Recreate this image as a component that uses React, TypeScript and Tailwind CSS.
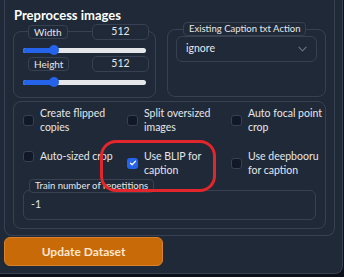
import React from "react";

const font = { fontFamily: "Lato, 'Noto Sans', sans-serif" };

function Chip({ children, className = "" }: { children: React.ReactNode; className?: string }) {
  return (
    <div
      className={
        "flex items-center h-[14px] px-[5px] rounded-[4px] border border-[#374151] bg-[#1f2937] text-[9.5px] leading-none text-[#e5e7eb] " +
        className
      }
    >
      {children}
    </div>
  );
}

function Slider({ label, value }: { label: string; value: number }) {
  const pct = 25;
  return (
    <div className="flex flex-col">
      <div className="flex items-center justify-between h-[16px] pl-[14px] pr-[6px]">
        <Chip className="text-[10px]">{label}</Chip>
        <div className="w-[57px] h-[16px] rounded-[5px] border border-[#374151] bg-[#1f2937] flex items-center justify-center text-[10.5px] text-[#e5e7eb]">
          {value}
        </div>
      </div>
      <div className="relative ml-[9px] mr-[9px] mt-[5px] h-[10px] flex items-center">
        <div className="w-full h-[5px] rounded-full bg-[#e5e7eb] overflow-hidden flex">
          <div className="h-full bg-[#2563eb]" style={{ width: `${pct}%` }} />
        </div>
        <div
          className="absolute top-0 w-[10px] h-[10px] rounded-full bg-[#2563eb]"
          style={{ left: `calc(${pct}% - 5px)` }}
        />
      </div>
    </div>
  );
}

function Check({ label, checked = false }: { label: React.ReactNode; checked?: boolean }) {
  return (
    <div className="flex items-center gap-[6px]">
      <div
        className={
          "shrink-0 w-[11px] h-[11px] rounded-[3px] flex items-center justify-center " +
          (checked ? "bg-[#2563eb]" : "bg-[#111827] border border-[#374151]")
        }
      >
        {checked && (
          <svg width="8" height="8" viewBox="0 0 16 16" fill="none">
            <path d="M3 8.5l3.2 3L13 4.5" stroke="white" strokeWidth="2.4" strokeLinecap="round" strokeLinejoin="round" />
          </svg>
        )}
      </div>
      <div className="text-[10.5px] leading-[14px] text-[#e5e7eb]">{label}</div>
    </div>
  );
}

export default function App() {
  return (
    <div className="w-[344px] h-[277px] bg-[#0b0f19] overflow-hidden relative" style={font}>
      <div className="w-[343px] h-[274px] bg-[#1f2937] border-r border-b border-[#374151] rounded-br-[8px] flex flex-col">
        <div className="ml-[4px] w-[331px] h-[236px] border-l border-r border-b border-[#374151] rounded-b-[8px] flex flex-col">
          <div className="pl-[9px] pt-[6px] h-[29px] text-[13px] font-bold text-white leading-[18px]">
            Preprocess images
          </div>
          <div className="flex gap-[11px] pl-[8px] pr-[8px]">
            <div className="w-[143px] h-[67px] border border-[#374151] rounded-[8px] flex flex-col gap-[2px] mt-[2px]">
              <div className="-mt-[8px]">
                <Slider label="Width" value={512} />
              </div>
              <div className="-mt-[1px]">
                <Slider label="Height" value={512} />
              </div>
            </div>
            <div className="w-[159px] h-[68px] border border-[#374151] rounded-[8px] flex flex-col">
              <div className="-mt-[8px] pl-[15px] flex">
                <Chip>Existing Caption txt Action</Chip>
              </div>
              <div className="mx-[8px] mt-[0px] h-[26px] rounded-[6px] border border-[#374151] flex items-center justify-between px-[9px]">
                <span className="text-[10.5px] text-[#e5e7eb]">ignore</span>
                <svg width="9" height="6" viewBox="0 0 10 6" fill="none">
                  <path d="M1 1l4 4 4-4" stroke="#6b7280" strokeWidth="1.3" strokeLinecap="round" strokeLinejoin="round" />
                </svg>
              </div>
            </div>
          </div>
          <div className="ml-[8px] mr-[8px] mt-[3px] h-[128px] border border-[#374151] rounded-[8px] flex flex-col">
            <div className="grid grid-cols-[104px_104px_1fr] items-start pl-[9px] pt-[4px] gap-y-[15px]">
              <Check label={<>Create flipped<br />copies</>} />
              <Check label={<>Split oversized<br />images</>} />
              <Check label={<>Auto focal point<br />crop</>} />
              <Check label="Auto-sized crop" />
              <Check checked label={<>Use BLIP for<br />caption</>} />
              <Check label={<>Use deepbooru<br />for caption</>} />
            </div>
            <div className="mt-[2px] pl-[15px] relative z-10 flex">
              <Chip>Train number of repetitions</Chip>
            </div>
            <div className="mx-[9px] -mt-[3px] h-[30px] rounded-[6px] border border-[#374151] flex items-center pl-[7px] text-[10.5px] text-[#e5e7eb]">
              -1
            </div>
          </div>
        </div>
        <button className="ml-[4px] mt-[1px] w-[159px] h-[29px] rounded-[6px] bg-[#c86a08] border border-[#d9822b] text-[12px] font-bold text-[#fde7cf]">
          Update Dataset
        </button>
      </div>
      <div className="absolute z-20 left-[100px] top-[140px] w-[116px] h-[52px] border-[3px] border-[#e3262b] rounded-[16px] pointer-events-none" />
    </div>
  );
}
